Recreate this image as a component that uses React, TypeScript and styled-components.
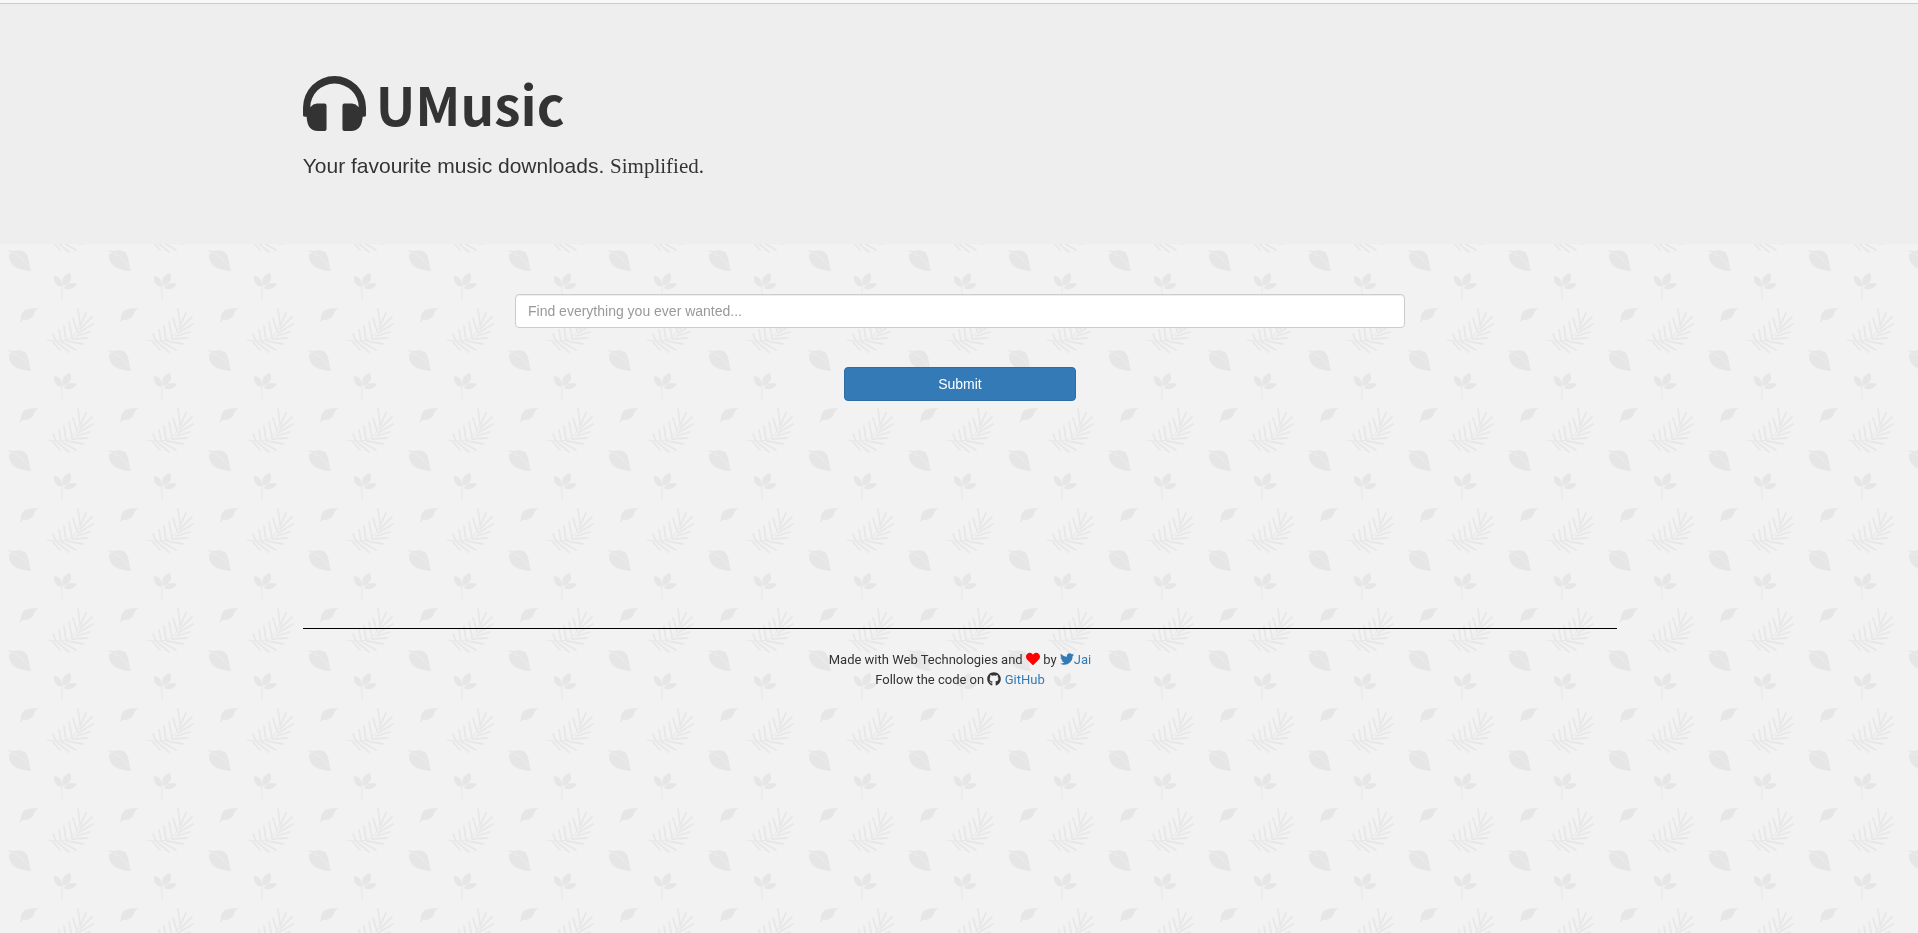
import React from 'react';
import styled, { createGlobalStyle } from 'styled-components';
import { FaHeart, FaTwitter, FaGithub } from 'react-icons/fa';

const Global = createGlobalStyle`
  *, *::before, *::after { box-sizing: border-box; }
  body {
    margin: 0;
    background: #f2f2f2;
    color: #333;
    font: 14px/20px "Liberation Sans", Arial, sans-serif;
  }
`;

const Backdrop = styled.svg`
  position: fixed;
  inset: 0;
  z-index: -1;
  width: 100%;
  height: 100%;
`;

const TopBar = styled.div`
  height: 4px;
  background: #f8f8f8;
  border-bottom: 1px solid #ccc;
`;

const Container = styled.div`
  margin: 0 14.9% 0 15%;
  padding: 0 15px;
`;

const Hero = styled.header`
  padding: 60px 0 62px;
  background: #eee;
`;

const Title = styled.h1`
  display: flex;
  align-items: center;
  gap: 10px;
  height: 78px;
  margin: 0;
  font: 700 53px/78px "Noto Sans CJK SC", sans-serif;
`;

const HeadphonesIcon = styled.svg`
  width: 63px;
  height: 55px;
  fill: #333;
`;

const Tagline = styled.p`
  margin: 8px 0 0;
  font-size: 21px;
  line-height: 32px;
`;

const Serif = styled.span`
  font-family: "Liberation Serif", "Times New Roman", serif;
`;

const SearchForm = styled.form`
  display: flex;
  flex-direction: column;
  align-items: center;
  gap: 39px;
  padding-top: 50px;
`;

const SearchInput = styled.input`
  width: 67.7%;
  height: 34px;
  padding: 6px 12px;
  border: 1px solid #ccc;
  border-radius: 4px;
  background: #fff;
  font: 14px/20px "Liberation Sans", Arial, sans-serif;
  box-shadow: inset 0 1px 1px rgba(0, 0, 0, 0.075);
  &::placeholder { color: #999; }
`;

const SubmitButton = styled.button`
  width: 17.7%;
  height: 34px;
  border: 1px solid #2e6da4;
  border-radius: 4px;
  background: #337ab7;
  color: #fff;
  font: 14px/20px "Liberation Sans", Arial, sans-serif;
`;

const Footer = styled.footer`
  margin-top: 227px;
  padding-top: 21px;
  border-top: 1px solid #000;
  font-family: Roboto, sans-serif;
  font-size: 13px;
  text-align: center;
`;

const FooterLine = styled.div`
  svg {
    font-size: 14px;
    vertical-align: -2px;
  }
`;

const Link = styled.a`
  color: #337ab7;
  text-decoration: none;
`;

function LeafBackdrop() {
  return (
    <Backdrop aria-hidden="true">
      <defs>
        <pattern id="leaves" width="100" height="100" patternUnits="userSpaceOnUse">
          <g fill="#e6e6e6">
            <path d="M39 8Q34 11 34 14Q32 20 23 20L19 23L21 19Q20 14 25 10Q29 8 39 8Z" />
            <path d="M7 50L14 51Q20 49 25 52Q29 57 29 63L31 71Q20 70 15 67Q8 62 9 54L12 53Z" />
            <path d="M54 76Q63 77 62 87Q53 86 54 76ZM70 73Q74 82 63 86Q60 76 70 73ZM77 84Q71 92 64 88Q68 81 77 84Z" />
          </g>
          <g fill="none" stroke="#e7e7e7" strokeLinecap="round">
            <path strokeWidth="1" d="M62 99V86M47 40Q76 46 80 22" />
            <path
              strokeWidth="1.8"
              d="M80 24L78 9M80 26L86 13M80 29L92 17M78 33L93 24M76 36L90 32M72 39L87 38M67 41L83 44M62 42L76 50M57 42L69 52M53 42L60 50M77 31L73 18M72 37L69 22M66 40L64 26M61 41L59 30M56 41L53 34"
            />
          </g>
          <path fill="none" stroke="#ededed" d="M13 53Q23 57 29 68" />
        </pattern>
      </defs>
      <rect width="100%" height="100%" fill="url(#leaves)" />
    </Backdrop>
  );
}

export default function App() {
  return (
    <>
      <Global />
      <LeafBackdrop />
      <TopBar />
      <Hero>
        <Container>
          <Title>
            <HeadphonesIcon viewBox="0 0 190 166" aria-hidden="true">
              <path d="M0 95A95 95 0 0 1 190 95V119Q190 123 183 123H180C178 150 168 166 145 166H125Q119 166 119 160V90Q119 83 125 83H148Q160 84 168 94A73 71 0 0 0 22 94Q30 84 42 83H65Q71 83 71 90V160Q71 166 65 166H45C22 166 12 150 11 123H7Q0 123 0 119Z" />
            </HeadphonesIcon>
            UMusic
          </Title>
          <Tagline>Your favourite music downloads. <Serif>Simplified.</Serif></Tagline>
        </Container>
      </Hero>
      <Container>
        <SearchForm onSubmit={(e) => e.preventDefault()}>
          <SearchInput aria-label="Search" placeholder="Find everything you ever wanted..." />
          <SubmitButton>Submit</SubmitButton>
        </SearchForm>
        <Footer>
          <FooterLine>Made with Web Technologies and <FaHeart color="red" /> by <Link href="#"><FaTwitter />Jai</Link></FooterLine>
          <FooterLine>Follow the code on <FaGithub /> <Link href="#">GitHub</Link></FooterLine>
        </Footer>
      </Container>
    </>
  );
}
